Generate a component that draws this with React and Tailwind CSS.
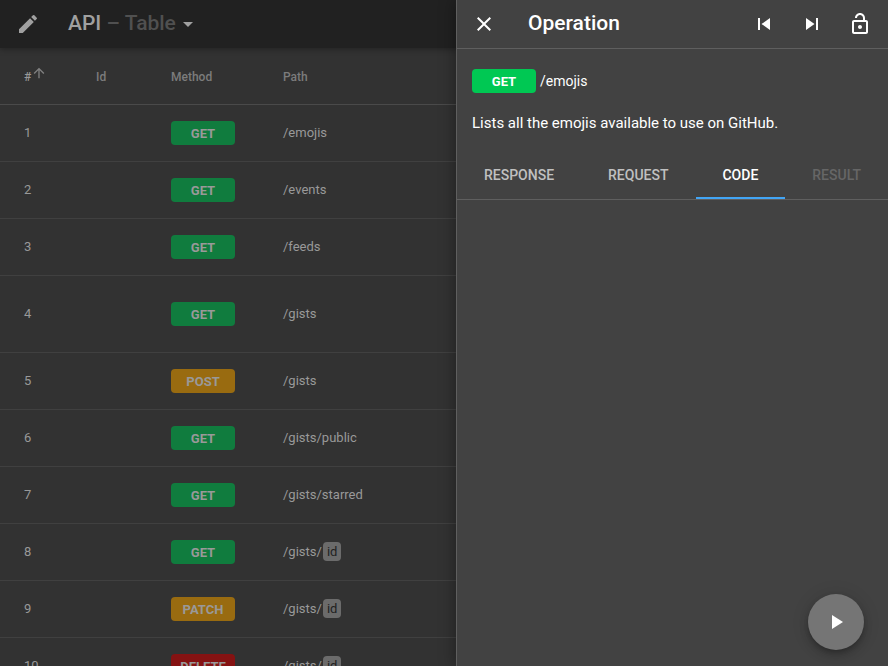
import { useState } from "react";
import {
  MdArrowDropDown,
  MdArrowUpward,
  MdClose,
  MdEdit,
  MdOutlineLockOpen,
  MdPlayArrow,
  MdSkipNext,
  MdSkipPrevious,
} from "react-icons/md";

const methodColors = {
  GET: "bg-[#107c3e]",
  POST: "bg-[#996b10]",
  PATCH: "bg-[#996b10]",
  DELETE: "bg-[#851212]",
};

const operations = [
  { method: "GET", path: "/emojis" },
  { method: "GET", path: "/events" },
  { method: "GET", path: "/feeds" },
  { method: "GET", path: "/gists", tall: true },
  { method: "POST", path: "/gists" },
  { method: "GET", path: "/gists/public" },
  { method: "GET", path: "/gists/starred" },
  { method: "GET", path: "/gists/", param: "id" },
  { method: "PATCH", path: "/gists/", param: "id" },
  { method: "DELETE", path: "/gists/", param: "id" },
];

const tabs = [
  { name: "Response" },
  { name: "Request" },
  { name: "Code" },
  { name: "Result", disabled: true },
];

function IconButton({ label, children }) {
  return (
    <button
      type="button"
      aria-label={label}
      className="flex size-12 shrink-0 items-center justify-center rounded-full text-2xl"
    >
      {children}
    </button>
  );
}

function TopBar() {
  return (
    <header className="relative flex h-12 items-center bg-[#212121] pl-1 text-[#a0a0a0] shadow-[0_1px_6px_rgba(0,0,0,0.35)]">
      <IconButton label="Edit">
        <MdEdit />
      </IconButton>
      <button
        type="button"
        className="ml-4 flex items-center text-[21px] font-medium whitespace-pre"
      >
        <span>API</span>
        <span className="text-[#505050]"> – Table</span>
        <MdArrowDropDown className="text-2xl" />
      </button>
    </header>
  );
}

function OperationsTable() {
  return (
    <table className="w-full table-fixed border-separate border-spacing-0 text-left text-[13px] text-[#999999]">
      <colgroup>
        <col className="w-[72px]" />
        <col className="w-[75px]" />
        <col className="w-[112px]" />
        <col />
      </colgroup>
      <thead className="text-xs text-[#7c7c7c]">
        <tr className="h-[57px]">
          <th className="border-b border-[#4a4a4a] pt-px pl-6 font-medium text-[#999999]">
            <button type="button" className="flex items-center">
              #
              <MdArrowUpward className="mb-2 text-base text-[#808080]" />
            </button>
          </th>
          <th className="border-b border-[#4a4a4a] pt-0.5 pl-6 font-medium">Id</th>
          <th className="border-b border-[#4a4a4a] pt-0.5 pl-6 font-medium">Method</th>
          <th className="border-b border-[#4a4a4a] pt-0.5 pl-6 font-medium">Path</th>
        </tr>
      </thead>
      <tbody>
        {operations.map((op, i) => (
          <tr key={i} className={op.tall ? "h-[77px]" : "h-[57px]"}>
            <td className="border-b border-[#404040] pl-6">{i + 1}</td>
            <td className="border-b border-[#404040] pl-6" />
            <td className="border-b border-[#404040] pl-6">
              <span
                className={`flex h-6 w-16 items-center justify-center rounded pt-px font-bold ${methodColors[op.method]}`}
              >
                {op.method}
              </span>
            </td>
            <td className="border-b border-[#404040] pl-6">
              {op.path}
              {op.param && (
                <span className="ml-px rounded bg-[#6b6b6b] px-1 py-0.5 text-[#212121]">
                  {op.param}
                </span>
              )}
            </td>
          </tr>
        ))}
      </tbody>
    </table>
  );
}

function OperationDrawer() {
  const [active, setActive] = useState("Code");
  return (
    <aside className="absolute inset-y-0 right-0 flex w-[432px] flex-col border-l border-[#5f5f5f] bg-[#424242] text-white shadow-[0_0_16px_rgba(0,0,0,0.4)]">
      <div className="flex h-[49px] items-center border-b border-[#5f5f5f] pr-1 pl-[3px]">
        <IconButton label="Close">
          <MdClose />
        </IconButton>
        <h2 className="ml-5 flex-1 text-[21px] font-medium">Operation</h2>
        <IconButton label="Previous operation">
          <MdSkipPrevious />
        </IconButton>
        <IconButton label="Next operation">
          <MdSkipNext />
        </IconButton>
        <IconButton label="Unlock">
          <MdOutlineLockOpen />
        </IconButton>
      </div>
      <div className="px-[15px] pt-5 text-sm">
        <div className="flex items-center gap-1">
          <span className="flex h-6 w-16 items-center justify-center rounded bg-[#00c853] pt-0.5 text-[13px] font-bold">
            GET
          </span>
          <span>/emojis</span>
        </div>
        <p className="pt-5 text-[15px] leading-5">
          Lists all the emojis available to use on GitHub.
        </p>
      </div>
      <div
        role="tablist"
        className="mt-[18px] flex h-[49px] border-b border-[#5f5f5f] text-sm font-medium uppercase"
      >
        {tabs.map((tab) => (
          <button
            key={tab.name}
            type="button"
            role="tab"
            aria-selected={active === tab.name}
            disabled={tab.disabled}
            onClick={() => setActive(tab.name)}
            className={`flex-auto border-b-2 pt-0.5 uppercase ${
              active === tab.name
                ? "border-[#42a5f5] text-white"
                : tab.disabled
                  ? "border-transparent text-[#666666]"
                  : "border-transparent text-[#c0c0c0]"
            }`}
          >
            {tab.name}
          </button>
        ))}
      </div>
      <button
        type="button"
        aria-label="Run"
        className="absolute right-6 bottom-4 flex size-14 items-center justify-center rounded-full bg-[#757575] text-2xl shadow-[0_3px_5px_-1px_rgba(0,0,0,0.2),0_6px_10px_rgba(0,0,0,0.14),0_1px_18px_rgba(0,0,0,0.12)]"
      >
        <MdPlayArrow />
      </button>
    </aside>
  );
}

export default function App() {
  return (
    <div className="relative h-screen overflow-hidden bg-[#323232] font-[Roboto,sans-serif]">
      <TopBar />
      <main>
        <OperationsTable />
      </main>
      <OperationDrawer />
    </div>
  );
}
